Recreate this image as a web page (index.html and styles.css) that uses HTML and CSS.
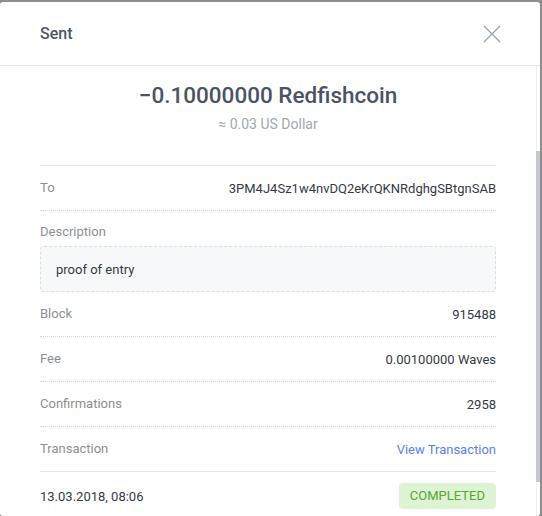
FILE: index.html
```html
<!DOCTYPE html>
<html>
<head>
<meta charset="utf-8">
<link rel="stylesheet" href="styles.css">
</head>
<body>
<div class="modal">
  <div class="header">
    <div class="title">Sent</div>
    <svg class="close" width="18" height="18" viewBox="0 0 18 18"><path d="M1 1L17 17M17 1L1 17" stroke="#9aa3b1" stroke-width="1.3" fill="none"/></svg>
  </div>
  <div class="body">
    <div class="content">
      <div class="amount">−0.10000000 Redfishcoin</div>
      <div class="fiat">≈ 0.03 US Dollar</div>
      <div class="rows">
        <div class="row"><span class="label">To</span><span class="value">3PM4J4Sz1w4nvDQ2eKrQKNRdghgSBtgnSAB</span></div>
        <div class="desc">
          <div class="label">Description</div>
          <div class="desc-box">proof of entry</div>
        </div>
        <div class="row"><span class="label">Block</span><span class="value">915488</span></div>
        <div class="row"><span class="label">Fee</span><span class="value">0.00100000 Waves</span></div>
        <div class="row"><span class="label">Confirmations</span><span class="value">2958</span></div>
        <div class="row last"><span class="label">Transaction</span><span class="link">View Transaction</span></div>
      </div>
      <div class="footer">
        <span class="date">13.03.2018, 08:06</span>
        <span class="badge">COMPLETED</span>
      </div>
    </div>
    <div class="scrollbar"><div class="thumb"></div></div>
  </div>
</div>
</body>
</html>
```

FILE: styles.css
```css
html, body {
  margin: 0;
  padding: 0;
}
body {
  background: #8d8d8d;
  font-family: Roboto, "Liberation Sans", sans-serif;
  width: 542px;
  height: 516px;
  overflow: hidden;
}
.modal {
  margin-top: 2px;
  width: 540px;
  height: 514px;
  background: #fff;
  border-radius: 3px;
  display: flex;
  flex-direction: column;
  overflow: hidden;
}
.header {
  height: 63px;
  flex: none;
  border-bottom: 1px solid #e3e6ea;
  display: flex;
  align-items: center;
  justify-content: space-between;
  padding: 0 39px 0 40px;
}
.title {
  font-size: 16px;
  font-weight: 500;
  color: #4d5668;
}
.close {
  display: block;
}
.body {
  flex: 1;
  display: flex;
  min-height: 0;
}
.content {
  flex: 1;
  padding: 0 40px;
}
.amount {
  margin-top: 14px;
  text-align: center;
  font-size: 22.5px;
  font-weight: 500;
  line-height: 30px;
  color: #4a5366;
}
.fiat {
  margin-top: 4px;
  text-align: center;
  font-size: 14px;
  line-height: 20px;
  color: #a0a8b5;
}
.rows {
  margin-top: 31px;
  border-top: 1px solid #e3e6ea;
}
.row {
  height: 44px;
  display: flex;
  align-items: center;
  justify-content: space-between;
  border-bottom: 1px dotted #d3d7dd;
  font-size: 13px;
}
.row.last {
  border-bottom: 1px solid #e3e6ea;
}
.label {
  color: #8c8f94;
  font-size: 13px;
  line-height: 20px;
}
.value {
  color: #343a46;
}
.link {
  color: #5a7fe6;
}
.desc {
  padding-top: 11px;
}
.desc .label {
  margin-bottom: 4px;
}
.desc-box {
  border: 1px dashed #d9dde4;
  border-radius: 4px;
  background: #f7f8fa;
  box-sizing: border-box;
  height: 46px;
  padding: 0 15px;
  display: flex;
  align-items: center;
  font-size: 13px;
  color: #343a46;
}
.footer {
  height: 48px;
  display: flex;
  align-items: center;
  justify-content: space-between;
  font-size: 13px;
}
.date {
  color: #343a46;
}
.badge {
  background: #dcf4d3;
  color: #5aa52d;
  border-radius: 4px;
  height: 26px;
  line-height: 26px;
  padding: 0 11px;
  font-size: 13px;
}
.scrollbar {
  width: 4px;
  flex: none;
  border-left: 1px solid #eceef1;
  box-sizing: border-box;
}
.thumb {
  margin-top: 85px;
  height: 331px;
  background: #c3cad6;
  margin-left: -1px;
}
```
